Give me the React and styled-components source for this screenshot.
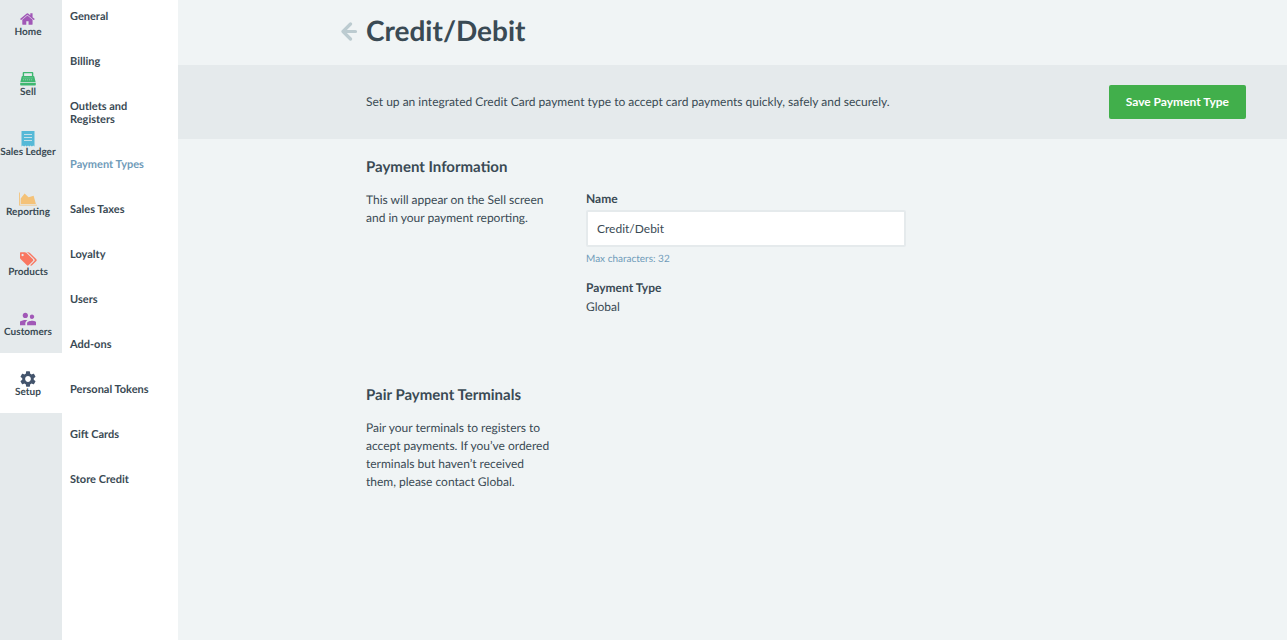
import React, { useState } from "react";
import styled, { createGlobalStyle, ThemeProvider } from "styled-components";
import { MdSettings, MdSupervisorAccount } from "react-icons/md";

const theme = {
  background: "#f0f4f5",
  panel: "#e5eaec",
  text: "#3a4a54",
  link: "#6f9bb9",
  arrow: "#bccbd0",
  success: "#41af4b",
};

const GlobalStyle = createGlobalStyle`
  *, *::before, *::after {
    box-sizing: border-box;
  }

  body {
    margin: 0;
    font-family: Lato, "Liberation Sans", sans-serif;
    font-size: 12px;
    line-height: 18px;
    color: ${({ theme }) => theme.text};
    background: ${({ theme }) => theme.background};
    text-rendering: geometricPrecision;
  }
`;

const Layout = styled.div`
  display: flex;
  min-height: 100vh;
`;

const PrimaryNav = styled.nav`
  display: flex;
  flex-direction: column;
  flex: none;
  width: 62px;
  background: ${({ theme }) => theme.panel};
`;

const PrimaryLink = styled.a`
  display: flex;
  flex-direction: column;
  align-items: center;
  justify-content: flex-end;
  height: 60px;
  padding: 0 6px 15px 0;
  font-size: 10px;
  font-weight: 700;
  line-height: 11px;
  white-space: nowrap;
  color: inherit;
  text-decoration: none;
  background: ${({ $active }) => ($active ? "#fff" : "transparent")};

  &:first-child {
    height: 53px;
  }

  svg {
    flex: none;
    color: ${({ $color }) => $color};
  }
`;

const SecondaryNav = styled.nav`
  display: flex;
  flex-direction: column;
  flex: none;
  gap: 32px;
  width: 116px;
  padding: 10px 24px 32px 8px;
  background: #fff;
`;

const SecondaryLink = styled.a`
  font-size: 11px;
  font-weight: 700;
  line-height: 13px;
  color: ${({ theme, $active }) => ($active ? theme.link : theme.text)};
  text-decoration: none;
  white-space: ${({ $wrap }) => ($wrap ? "normal" : "nowrap")};
`;

const Main = styled.main`
  flex: 1;
  min-width: 0;
`;

const PageHeader = styled.header`
  display: flex;
  align-items: center;
  gap: 8px;
  height: 65px;
  padding: 0 41px 6px 162px;
`;

const BackLink = styled.a`
  display: flex;
  color: ${({ theme }) => theme.arrow};
`;

const Title = styled.h1`
  margin: 0;
  font-size: 28px;
  font-weight: 700;
  line-height: 36px;
`;

const ActionBar = styled.div`
  display: flex;
  align-items: center;
  justify-content: space-between;
  gap: 24px;
  min-height: 74px;
  padding: 16px 41px 16px 188px;
  background: ${({ theme }) => theme.panel};
`;

const Paragraph = styled.p`
  margin: 0;
`;

const SaveButton = styled.button`
  flex: none;
  height: 34px;
  padding: 0 17px;
  border: 0;
  border-radius: 2px;
  font: inherit;
  font-weight: 700;
  color: #fff;
  background: ${({ theme }) => theme.success};
  cursor: pointer;
`;

const Content = styled.form`
  display: flex;
  flex-direction: column;
  gap: 68px;
  padding: 18px 41px 40px 188px;
`;

const SectionTitle = styled.h2`
  margin: 0 0 14px;
  font-size: 15px;
  font-weight: 700;
  line-height: 20px;
`;

const SectionBody = styled.div`
  display: grid;
  grid-template-columns: 184px minmax(0, 320px);
  column-gap: 36px;
`;

const Fields = styled.div`
  display: flex;
  flex-direction: column;
`;

const Label = styled.label`
  font-weight: 700;
  line-height: 16px;
`;

const Input = styled.input`
  width: 100%;
  height: 37px;
  margin: 3px 0 4px;
  padding: 0 9px;
  border: 2px solid ${({ theme }) => theme.panel};
  border-radius: 2px;
  font: inherit;
  color: inherit;
  background: #fff;
`;

const Hint = styled.small`
  font-size: 10px;
  line-height: 16px;
  color: ${({ theme }) => theme.link};
`;

const Details = styled.dl`
  margin: 12px 0 0;

  dt {
    font-weight: 700;
  }

  dd {
    margin: 0;
    line-height: 20px;
  }
`;

const HomeIcon = () => (
  <svg width="16" height="16" viewBox="0 0 1792 1792" fill="currentColor">
    <path d="M1408 992v480q0 26-19 45t-45 19h-384v-384h-256v384h-384q-26 0-45-19t-19-45v-480q0-1 .5-3t.5-3l575-474 575 474q1 2 1 6zm223-69l-62 74q-8 9-21 11h-3q-13 0-21-7l-692-577-692 577q-12 8-24 7-13-2-21-11l-62-74q-8-10-7-23.5t11-21.5l719-599q32-26 76-26t76 26l244 204v-195q0-14 9-23t23-9h192q14 0 23 9t9 23v408l219 182q10 8 11 21.5t-7 23.5z" />
  </svg>
);

const RegisterIcon = () => (
  <svg width="16" height="16" viewBox="0 0 16 16" fill="currentColor">
    <path
      fillRule="evenodd"
      d="M3.600 1h8.800q.9 0 .9.9V5h.3q.5 0 .7.6L15.600 11H.4L1.700 5.600Q1.900 5 2.400 5h.3V1.900q0-.9.9-.9zM4.100 2.300V5h7.800V2.300z"
    />
    <path d="M.2 11.800h15.600v2q0 .7-.7.7H.9q-.7 0-.7-.7z" />
    <path
      d="M3.400 6.900h9.200M2.900 8.800h10.200"
      fill="none"
      stroke="#e5eaec"
      strokeWidth=".7"
      strokeDasharray="1.200 .8"
      opacity=".65"
    />
  </svg>
);

const LedgerIcon = () => (
  <svg width="16" height="16" viewBox="0 0 16 16" fill="currentColor">
    <path d="M1.500 0h13v15.500l-1.300-.9-1.300.9-1.300-.9-1.300.9-1.300-.9-1.300.9-1.300-.9-1.300.9-1.300-.9-1.300.9z" />
    <path
      d="M4 3.500h8M4 6.500h8M4 9.500h8"
      fill="none"
      stroke="#e5eaec"
      strokeWidth=".8"
    />
  </svg>
);

const ChartIcon = () => (
  <svg width="18" height="16" viewBox="0 0 2048 1792" fill="currentColor">
    <path d="M2048 1536v96h-2048v-1472h96v1376z" />
    <path d="M1664 512l256 960h-1728v-640l448-576 448 448z" />
  </svg>
);

const TagsIcon = () => (
  <svg width="17" height="16" viewBox="0 0 1835 1792" fill="currentColor">
    <path d="M384 448q0-53-37.5-90.5t-90.5-37.5-90.5 37.5-37.5 90.5 37.5 90.5 90.5 37.5 90.5-37.5 37.5-90.5zm1067 576q0 53-37 90l-491 492q-39 37-91 37-53 0-90-37l-715-716q-38-37-64.5-101t-26.500-117v-416q0-52 38-90t90-38h416q53 0 117 26.500t102 64.500l715 714q37 39 37 91zm384 0q0 53-37 90l-491 492q-39 37-91 37-36 0-59-14t-53-45l470-470q37-37 37-90 0-52-37-91l-715-714q-38-38-102-64.500t-117-26.500h224q53 0 117 26.500t102 64.500l715 714q37 39 37 91z" />
  </svg>
);

const CustomersIcon = () => (
  <MdSupervisorAccount size={16} viewBox="3 3 18 18" />
);

const SetupIcon = () => <MdSettings size={16} viewBox="2 2 20 20" />;

const ArrowIcon = () => (
  <svg
    width="18"
    height="22"
    viewBox="0 0 18 22"
    fill="none"
    stroke="currentColor"
    strokeWidth="3.200"
    strokeLinecap="round"
    strokeLinejoin="round"
  >
    <path d="M10.500 5 3 12.500l7.500 7.500M3.500 12.500h12" />
  </svg>
);

const primaryItems = [
  { name: "Home", color: "#a158b7", Icon: HomeIcon },
  { name: "Sell", color: "#3eb871", Icon: RegisterIcon },
  { name: "Sales Ledger", color: "#56b9d7", Icon: LedgerIcon },
  { name: "Reporting", color: "#f4c278", Icon: ChartIcon },
  { name: "Products", color: "#f97761", Icon: TagsIcon },
  { name: "Customers", color: "#a158b7", Icon: CustomersIcon },
  { name: "Setup", color: "#43546c", Icon: SetupIcon },
];

const secondaryItems = [
  "General",
  "Billing",
  "Outlets and Registers",
  "Payment Types",
  "Sales Taxes",
  "Loyalty",
  "Users",
  "Add-ons",
  "Personal Tokens",
  "Gift Cards",
  "Store Credit",
];

const App = () => {
  const [name, setName] = useState("Credit/Debit");

  return (
    <ThemeProvider theme={theme}>
      <GlobalStyle />
      <Layout>
        <PrimaryNav>
          {primaryItems.map(({ name, color, Icon }) => (
            <PrimaryLink
              key={name}
              href="#"
              $color={color}
              $active={name === "Setup"}
            >
              <Icon />
              {name}
            </PrimaryLink>
          ))}
        </PrimaryNav>
        <SecondaryNav>
          {secondaryItems.map((item) => (
            <SecondaryLink
              key={item}
              href="#"
              $active={item === "Payment Types"}
              $wrap={item.length > 16}
            >
              {item}
            </SecondaryLink>
          ))}
        </SecondaryNav>
        <Main>
          <PageHeader>
            <BackLink href="#" aria-label="Back">
              <ArrowIcon />
            </BackLink>
            <Title>Credit/Debit</Title>
          </PageHeader>
          <ActionBar>
            <Paragraph>
              Set up an integrated Credit Card payment type to accept card
              payments quickly, safely and securely.
            </Paragraph>
            <SaveButton type="submit" form="payment-type">
              Save Payment Type
            </SaveButton>
          </ActionBar>
          <Content id="payment-type" onSubmit={(e) => e.preventDefault()}>
            <section>
              <SectionTitle>Payment Information</SectionTitle>
              <SectionBody>
                <Paragraph>
                  This will appear on the Sell screen and in your payment
                  reporting.
                </Paragraph>
                <Fields>
                  <Label htmlFor="name">Name</Label>
                  <Input
                    id="name"
                    maxLength={32}
                    value={name}
                    onChange={(e) => setName(e.target.value)}
                  />
                  <Hint>Max characters: 32</Hint>
                  <Details>
                    <dt>Payment Type</dt>
                    <dd>Global</dd>
                  </Details>
                </Fields>
              </SectionBody>
            </section>
            <section>
              <SectionTitle>Pair Payment Terminals</SectionTitle>
              <SectionBody>
                <Paragraph>
                  Pair your terminals to registers to accept payments. If you’ve
                  ordered terminals but haven’t received them, please contact
                  Global.
                </Paragraph>
              </SectionBody>
            </section>
          </Content>
        </Main>
      </Layout>
    </ThemeProvider>
  );
};

export default App;
